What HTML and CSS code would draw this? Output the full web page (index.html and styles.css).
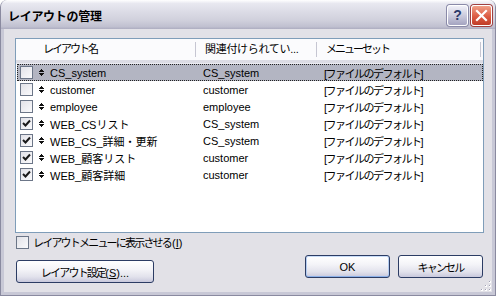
FILE: index.html
```html
<!DOCTYPE html>
<html lang="ja">
<head>
    <meta charset="UTF-8">
    <title>レイアウトの管理</title>
    <link rel="stylesheet" href="styles.css">
</head>
<body>
    <div class="window">
        <div class="titlebar">
            <span class="title">レイアウトの管理</span>
            <div class="caption-buttons">
                <span class="cap-btn help">?</span>
                <span class="cap-btn close">
                    <svg width="13" height="13" viewBox="0 0 13 13"><path d="M2 2 L11 11 M11 2 L2 11" stroke="#fff" stroke-width="2.2" stroke-linecap="square"/></svg>
                </span>
            </div>
        </div>
        <div class="client">
            <div class="listview">
                <div class="lv-header">
                    <div class="col c1">レイアウト名</div>
                    <div class="col c2">関連付けられてい...</div>
                    <div class="col c3">メニューセット</div>
                </div>
                <div class="lv-row selected">
                    <div class="cell c1"><span class="checkbox"></span><svg class="mover" width="5" height="7" viewBox="0 0 5 7"><path d="M2 0h1v1H2zM1 1h3v1H1zM0 2h5v1H0zM0 4h5v1H0zM1 5h3v1H1zM2 6h1v1H2z" fill="#111"/></svg><span>CS_system</span></div>
                    <div class="cell c2">CS_system</div>
                    <div class="cell c3">[ファイルのデフォルト]</div>
                </div>
                <div class="lv-row">
                    <div class="cell c1"><span class="checkbox"></span><svg class="mover" width="5" height="7" viewBox="0 0 5 7"><path d="M2 0h1v1H2zM1 1h3v1H1zM0 2h5v1H0zM0 4h5v1H0zM1 5h3v1H1zM2 6h1v1H2z" fill="#111"/></svg><span>customer</span></div>
                    <div class="cell c2">customer</div>
                    <div class="cell c3">[ファイルのデフォルト]</div>
                </div>
                <div class="lv-row">
                    <div class="cell c1"><span class="checkbox"></span><svg class="mover" width="5" height="7" viewBox="0 0 5 7"><path d="M2 0h1v1H2zM1 1h3v1H1zM0 2h5v1H0zM0 4h5v1H0zM1 5h3v1H1zM2 6h1v1H2z" fill="#111"/></svg><span>employee</span></div>
                    <div class="cell c2">employee</div>
                    <div class="cell c3">[ファイルのデフォルト]</div>
                </div>
                <div class="lv-row">
                    <div class="cell c1"><span class="checkbox checked"><svg width="11" height="11" viewBox="0 0 11 11"><path d="M2 5 L4.5 7.5 L9 2.5" stroke="#1a1a1a" stroke-width="2" fill="none"/></svg></span><svg class="mover" width="5" height="7" viewBox="0 0 5 7"><path d="M2 0h1v1H2zM1 1h3v1H1zM0 2h5v1H0zM0 4h5v1H0zM1 5h3v1H1zM2 6h1v1H2z" fill="#111"/></svg><span>WEB_CSリスト</span></div>
                    <div class="cell c2">CS_system</div>
                    <div class="cell c3">[ファイルのデフォルト]</div>
                </div>
                <div class="lv-row">
                    <div class="cell c1"><span class="checkbox checked"><svg width="11" height="11" viewBox="0 0 11 11"><path d="M2 5 L4.5 7.5 L9 2.5" stroke="#1a1a1a" stroke-width="2" fill="none"/></svg></span><svg class="mover" width="5" height="7" viewBox="0 0 5 7"><path d="M2 0h1v1H2zM1 1h3v1H1zM0 2h5v1H0zM0 4h5v1H0zM1 5h3v1H1zM2 6h1v1H2z" fill="#111"/></svg><span>WEB_CS_詳細・更新</span></div>
                    <div class="cell c2">CS_system</div>
                    <div class="cell c3">[ファイルのデフォルト]</div>
                </div>
                <div class="lv-row">
                    <div class="cell c1"><span class="checkbox checked"><svg width="11" height="11" viewBox="0 0 11 11"><path d="M2 5 L4.5 7.5 L9 2.5" stroke="#1a1a1a" stroke-width="2" fill="none"/></svg></span><svg class="mover" width="5" height="7" viewBox="0 0 5 7"><path d="M2 0h1v1H2zM1 1h3v1H1zM0 2h5v1H0zM0 4h5v1H0zM1 5h3v1H1zM2 6h1v1H2z" fill="#111"/></svg><span>WEB_顧客リスト</span></div>
                    <div class="cell c2">customer</div>
                    <div class="cell c3">[ファイルのデフォルト]</div>
                </div>
                <div class="lv-row">
                    <div class="cell c1"><span class="checkbox checked"><svg width="11" height="11" viewBox="0 0 11 11"><path d="M2 5 L4.5 7.5 L9 2.5" stroke="#1a1a1a" stroke-width="2" fill="none"/></svg></span><svg class="mover" width="5" height="7" viewBox="0 0 5 7"><path d="M2 0h1v1H2zM1 1h3v1H1zM0 2h5v1H0zM0 4h5v1H0zM1 5h3v1H1zM2 6h1v1H2z" fill="#111"/></svg><span>WEB_顧客詳細</span></div>
                    <div class="cell c2">customer</div>
                    <div class="cell c3">[ファイルのデフォルト]</div>
                </div>
            </div>
            <div class="bottom">
                <div class="bottom-left">
                    <label class="check-label"><span class="checkbox"></span><span class="narrow">レイアウトメニューに表示させる<span class="plain">(<u>I</u>)</span></span></label>
                    <button class="btn wide"><span class="narrow">レイアウト設定</span>(<u>S</u>)...</button>
                </div>
                <div class="bottom-right">
                    <button class="btn default">OK</button>
                    <button class="btn"><span class="narrow">キャンセル</span></button>
                </div>
            </div>
            <svg class="grip" width="10" height="10" viewBox="0 0 10 10">
                <path d="M8 0h2v2H8zM4 4h2v2H4zM8 4h2v2H8zM0 8h2v2H0zM4 8h2v2H4zM8 8h2v2H8z" fill="#fff"/>
                <path d="M8 0h1v1H8zM4 4h1v1H4zM8 4h1v1H8zM0 8h1v1H0zM4 8h1v1H4zM8 8h1v1H8z" fill="#a0a0b4"/>
            </svg>
        </div>
    </div>
</body>
</html>
```

FILE: styles.css
```css
body {
    margin: 0;
    font-family: "Liberation Sans", "Noto Sans CJK JP", sans-serif;
    font-size: 11px;
    color: #000;
    background: #fff;
}
.window {
    width: 496px;
    height: 296px;
    box-sizing: border-box;
    display: flex;
    flex-direction: column;
    background: #c8c8d6;
    border: 1px solid #8a8aa0;
    border-top: none;
    border-radius: 7px 7px 0 0;
    overflow: hidden;
}
.titlebar {
    height: 29px;
    flex-shrink: 0;
    display: flex;
    align-items: center;
    justify-content: space-between;
    padding: 0 3px 0 7px;
    background: linear-gradient(#ffffff 0%, #e8e8f0 12%, #dcdce6 40%, #d0d0dc 70%, #c0c0d0 92%, #acacc0 100%);
}
.title {
    font-family: "Noto Sans CJK JP", sans-serif;
    font-weight: bold;
    font-size: 12px;
    letter-spacing: -0.3px;
    padding-top: 1px;
}
.caption-buttons {
    display: flex;
    gap: 3px;
    padding-top: 1px;
}
.cap-btn {
    width: 19px;
    height: 19px;
    border: 1px solid #fff;
    border-radius: 3px;
    display: flex;
    align-items: center;
    justify-content: center;
    box-shadow: 0 0 0 1px #8a8aa8;
}
.help {
    background: linear-gradient(#f0f0f8, #c4c4d8 60%, #a4a4c0);
    color: #2c3a6a;
    font-weight: bold;
    font-size: 14px;
}
.close {
    background: linear-gradient(#f0a088, #dc5c44 55%, #c03c28);
    box-shadow: 0 0 0 1px #a04040;
}
.client {
    position: relative;
    flex: 1;
    margin: 0 3px 3px 3px;
    background: #e2e1e7;
    display: flex;
    flex-direction: column;
    padding: 9px 8px 0 11px;
}
.listview {
    height: 195px;
    box-sizing: border-box;
    border: 1px solid #7f9db9;
    background: #fff;
}
.lv-header {
    height: 21px;
    display: flex;
    align-items: center;
    background: #fbfbfd;
    border-bottom: 3px solid #dcdce4;
    box-shadow: 0 1px 0 #ececf2;
    margin-bottom: 1px;
}
.lv-header .col {
    height: 15px;
    line-height: 15px;
    border-right: 1px solid #c6c6d2;
    box-sizing: border-box;
    white-space: nowrap;
}
.lv-header .c1 { width: 180px; padding-left: 27px; letter-spacing: -2px; }
.lv-header .c2 { width: 121px; padding-left: 9px; letter-spacing: -0.3px; }
.lv-header .c3 { width: 164px; padding-left: 9px; letter-spacing: -2px; }
.lv-row {
    display: flex;
    height: 17px;
    box-sizing: border-box;
    border: 1px solid transparent;
    margin-left: 1px;
    align-items: center;
    white-space: nowrap;
}
.lv-row.selected {
    background: #b3b5c2;
    border: 1px dotted #222;
}
.cell {
    box-sizing: border-box;
    display: flex;
    align-items: center;
}
.lv-row .c1 { width: 178px; padding-left: 2px; }
.lv-row .c2 { width: 121px; padding-left: 7px; }
.lv-row .c3 { width: 164px; padding-left: 7px; letter-spacing: -1.5px; }
.checkbox {
    width: 13px;
    height: 13px;
    box-sizing: border-box;
    border: 1px solid #6c7688;
    background: linear-gradient(135deg, #e2e2e8, #fafafc);
    display: inline-flex;
    align-items: center;
    justify-content: center;
    flex-shrink: 0;
}
.mover {
    margin: 0 6px 0 6px;
}
.narrow {
    letter-spacing: -1.8px;
}
.plain {
    letter-spacing: 0;
    margin-left: 1px;
}
.bottom {
    display: flex;
    justify-content: space-between;
    margin-top: 1px;
    padding-left: 1px;
    padding-right: 1px;
}
.bottom-left {
    display: flex;
    flex-direction: column;
}
.check-label {
    height: 16px;
    display: flex;
    align-items: center;
    gap: 4px;
}
.btn {
    height: 23px;
    box-sizing: border-box;
    border: 1px solid #2c3c64;
    border-radius: 3px;
    background: linear-gradient(#ffffff 0%, #f4f4f8 40%, #e2e2ec 75%, #c8c8dc 100%);
    font-family: "Liberation Sans", "Noto Sans CJK JP", sans-serif;
    font-size: 11px;
    color: #000;
    padding: 0;
}
.wide {
    width: 138px;
    margin-top: 10px;
}
.bottom-right {
    display: flex;
    gap: 8px;
    margin-top: 21px;
}
.bottom-right .btn {
    width: 85px;
}
.default {
    box-shadow: inset 0 1px 0 #c8dcf8, inset 0 -1px 0 #8cb0e8, inset 1px 0 0 #b4ccf0, inset -1px 0 0 #b4ccf0;
}
.grip {
    position: absolute;
    right: 1px;
    bottom: 1px;
}
```
